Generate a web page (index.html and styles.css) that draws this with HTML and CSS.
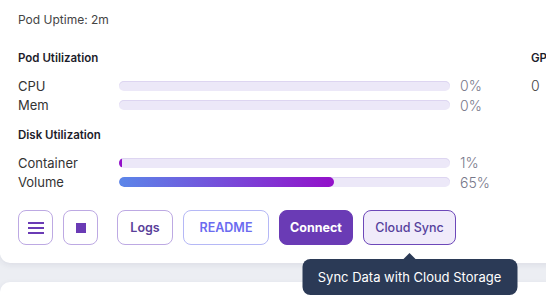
FILE: index.html
```html
<!DOCTYPE html>
<html lang="en">
<head>
  <meta charset="UTF-8">
  <title>Pod Card</title>
  <link rel="stylesheet" href="styles.css">
</head>
<body>

  <div class="pod-card">
    <div class="uptime">Pod Uptime: 2m</div>

    <div class="util-row">
      <div class="util-block">
        <div class="util-title">Pod Utilization</div>
        <div class="metric">
          <div class="metric-label">CPU</div>
          <div class="bar"><div class="fill" style="width: 0%"></div></div>
          <div class="metric-value">0%</div>
        </div>
        <div class="metric">
          <div class="metric-label">Mem</div>
          <div class="bar"><div class="fill" style="width: 0%"></div></div>
          <div class="metric-value">0%</div>
        </div>
      </div>
      <div class="gpu-block">
        <div class="util-title">GPU</div>
        <div class="gpu-value">0</div>
      </div>
    </div>

    <div class="util-block disk">
      <div class="util-title">Disk Utilization</div>
      <div class="metric">
        <div class="metric-label">Container</div>
        <div class="bar"><div class="fill single" style="width: 1%"></div></div>
        <div class="metric-value">1%</div>
      </div>
      <div class="metric">
        <div class="metric-label">Volume</div>
        <div class="bar"><div class="fill" style="width: 65%"></div></div>
        <div class="metric-value">65%</div>
      </div>
    </div>

    <div class="actions">
      <button class="btn icon-btn" title="Menu">
        <svg width="16" height="12" viewBox="0 0 16 12">
          <rect x="0" y="0" width="16" height="2" fill="#6a3bb5"/>
          <rect x="0" y="5" width="16" height="2" fill="#6a3bb5"/>
          <rect x="0" y="10" width="16" height="2" fill="#6a3bb5"/>
        </svg>
      </button>
      <button class="btn icon-btn" title="Stop">
        <span class="stop-square"></span>
      </button>
      <button class="btn logs">Logs</button>
      <button class="btn readme">README</button>
      <button class="btn connect">Connect</button>
      <div class="tip-wrap">
        <button class="btn cloud">Cloud Sync</button>
        <div class="tooltip">Sync Data with Cloud Storage</div>
      </div>
    </div>
  </div>

  <div class="pod-card next"></div>

</body>
</html>
```

FILE: styles.css
```css
body {
  margin: 0;
  font-family: Inter, "Noto Sans", sans-serif;
  background: #eceef3;
  overflow: hidden;
  width: 546px;
  height: 304px;
}

.pod-card {
  width: 640px;
  margin-top: -10px;
  background: #fff;
  border-radius: 10px;
  padding: 22px 18px 18px;
  box-sizing: border-box;
  box-shadow: 0 2px 6px rgba(40, 40, 80, 0.08);
}

.pod-card.next {
  margin-top: 19px;
  height: 60px;
}

.uptime {
  font-size: 12px;
  color: #444;
  line-height: 16px;
}

.util-row {
  display: flex;
  margin-top: 22px;
}

.util-block {
  width: 495px;
}

.gpu-block {
  margin-left: 18px;
}

.util-title {
  font-size: 11.5px;
  font-weight: 600;
  color: #1d1d2b;
  line-height: 16px;
  margin-bottom: 10px;
}

.disk {
  margin-top: 12px;
}

.metric {
  display: flex;
  align-items: center;
  height: 19.5px;
}

.metric-label {
  width: 101px;
  font-size: 13px;
  color: #333;
}

.bar {
  width: 331px;
  height: 10px;
  border-radius: 5px;
  background: #ece8f8;
  box-shadow: inset 0 1px 0 #ddd5f1;
  overflow: hidden;
}

.fill {
  height: 100%;
  min-width: 3px;
  border-radius: 5px;
  background: linear-gradient(90deg, #5b86e9, #9310c9);
}

.fill[style="width: 0%"] {
  display: none;
}

.fill.single {
  background: #9310c9;
}

.metric-value {
  margin-left: 10px;
  font-size: 14px;
  font-weight: 300;
  color: #77778a;
}

.gpu-value {
  font-size: 14px;
  font-weight: 300;
  color: #444;
  line-height: 20px;
}

.actions {
  display: flex;
  gap: 10px;
  margin-top: 18px;
}

.btn {
  height: 35px;
  padding: 0;
  border-radius: 8px;
  border: 1px solid #bda9e3;
  background: #fff;
  font-family: Inter, "Noto Sans", sans-serif;
  font-size: 12.5px;
  font-weight: 600;
  color: #5a3f9a;
  cursor: pointer;
  box-sizing: border-box;
  white-space: nowrap;
}

.icon-btn {
  width: 35px;
  display: flex;
  align-items: center;
  justify-content: center;
}

.stop-square {
  width: 10px;
  height: 10px;
  background: #6a3bb5;
}

.logs {
  width: 56px;
  margin-left: 9px;
}

.readme {
  width: 86px;
  color: #6b6bf0;
  border-color: #b5b8f6;
}

.connect {
  width: 74px;
  background: #6a3bb5;
  border-color: #6a3bb5;
  color: #fff;
  font-weight: 700;
}

.tip-wrap {
  position: relative;
}

.cloud {
  width: 93px;
  background: #f0ebfa;
  border-color: #6d48b9;
  font-weight: 500;
  color: #55409c;
}

.tooltip {
  position: absolute;
  top: 49px;
  left: 50%;
  transform: translateX(-50%);
  width: 215px;
  height: 36px;
  line-height: 36px;
  text-align: center;
  background: #2b3a56;
  color: #fff;
  font-size: 13px;
  border-radius: 8px;
  white-space: nowrap;
  z-index: 2;
}

.tooltip::before {
  content: "";
  position: absolute;
  top: -6px;
  left: 50%;
  margin-left: -6px;
  border-left: 6px solid transparent;
  border-right: 6px solid transparent;
  border-bottom: 6px solid #2b3a56;
}
```
